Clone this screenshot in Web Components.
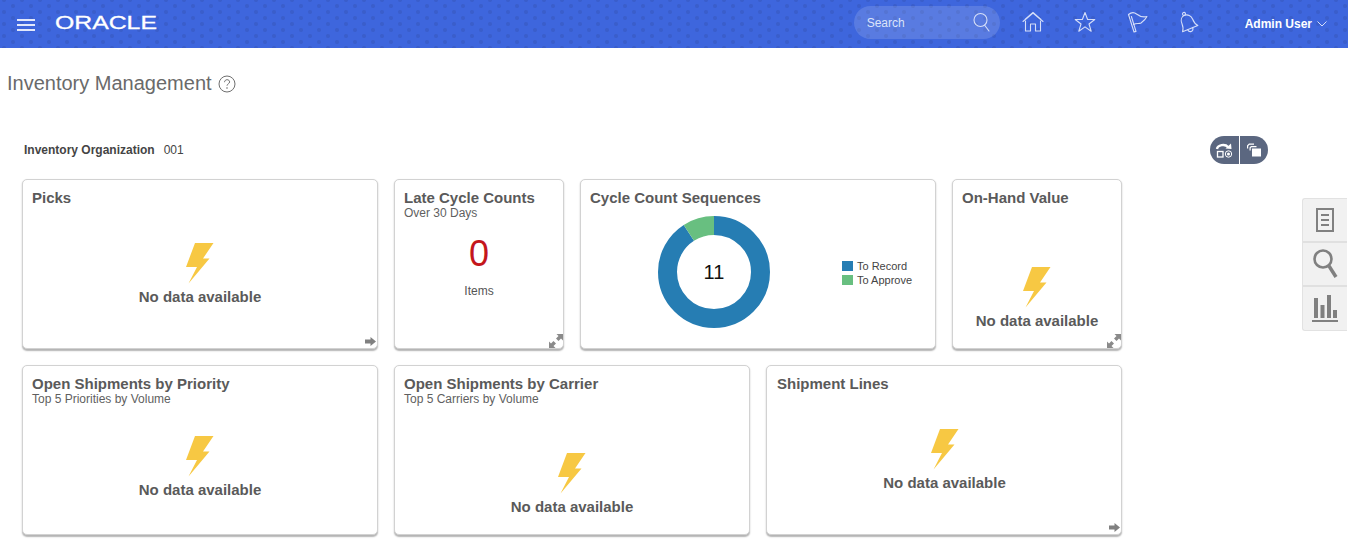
<!DOCTYPE html>
<html lang="en">
<head>
<meta charset="utf-8">
<title>Inventory Management</title>
<style>
  html, body { margin: 0; padding: 0; background: #fff; overflow: hidden; }
  body { font-family: "Liberation Sans", Arial, sans-serif; color: #555; height: 542px; position: relative; }
</style>
</head>
<body>
  <app-header></app-header>
  <page-title>Inventory Management</page-title>
  <org-bar label="Inventory Organization" value="001"></org-bar>
  <side-tabs></side-tabs>
  <card-grid>
    <dash-card style="grid-column: span 2" heading="Picks" corner="arrow"><no-data offset="36"></no-data></dash-card>
    <dash-card heading="Late Cycle Counts" sub="Over 30 Days" corner="expand"><count-tile value="0" unit="Items"></count-tile></dash-card>
    <dash-card style="grid-column: span 2" heading="Cycle Count Sequences"><donut-chart total="11"></donut-chart></dash-card>
    <dash-card heading="On-Hand Value" corner="expand"><no-data offset="60"></no-data></dash-card>
    <dash-card style="grid-column: span 2" heading="Open Shipments by Priority" sub="Top 5 Priorities by Volume"><no-data offset="31"></no-data></dash-card>
    <dash-card style="grid-column: span 2" heading="Open Shipments by Carrier" sub="Top 5 Carriers by Volume"><no-data offset="48"></no-data></dash-card>
    <dash-card style="grid-column: span 2; padding-left: 10px" heading="Shipment Lines" corner="arrow"><no-data offset="36"></no-data></dash-card>
  </card-grid>

<script>
const ICONS = {
  search: '<circle cx="10.5" cy="9" r="6.5"/><path d="M14.5 14l4.5 6"/>',
  home: '<path d="M2 11.5 12 3l10 8.500M4 9.500 12 2.500l8 7"/><path d="M4.500 11v10h5v-7h5v7h5V11"/>',
  star: '<path d="M12 2.500l2.600 7h7.200l-5.800 4.500 2.200 7.200-6.200-4.300-6.200 4.300 2.200-7.200L2.200 9.500h7.200z"/>',
  flag: '<path d="M3.500 4.500 9 22l2-.6L6.400 6.500"/><path d="M3.500 4.500C6 2.500 9 2 11.500 4s6 3.500 10.500 2.500c-1.500 3-4 5-6 6.500-2 1-5-.2-7.500 1.500"/>',
  bell: '<g transform="translate(-1 .5) rotate(-22 12 12)"><circle cx="11.500" cy="2.600" r="1.500"/><path d="M11.500 4C8 4 6 7 6 10.500c0 3.500-.8 6-2.500 8h16.500c-1.700-2-2.500-4.500-2.500-8C17.500 7 15 4 11.500 4z"/><path d="M9 18.500c.2 2 1.300 3 2.700 3s2.600-1 2.800-3"/></g>'
};

function strokeIcon(name, size) {
  return `<svg width="${size}" height="${size}" viewBox="0 0 24 24" fill="none" stroke="#d5def8" stroke-width="1.100" stroke-linejoin="round" stroke-linecap="round">${ICONS[name]}</svg>`;
}

class AppHeader extends HTMLElement {
  connectedCallback() {
    this.attachShadow({ mode: 'open' }).innerHTML = `
      <style>
        :host {
          display: flex;
          align-items: center;
          height: 48px;
          padding: 0 21px 0 17px;
          box-sizing: border-box;
          background-color: #3e66dd;
          background-image:
            radial-gradient(circle, #3a5ecb 0 1.500px, transparent 2.500px),
            radial-gradient(circle, #3a5ecb 0 1.500px, transparent 2.500px);
          background-size: 18px 12px;
          background-position: 4px 0, 13px 6px;
          color: #fff;
        }
        .burger { width: 18px; height: 12px; margin-top: 1px; border-top: 2px solid #e2e8fb; border-bottom: 2px solid #e2e8fb; position: relative; box-sizing: border-box; }
        .burger::after { content: ""; position: absolute; left: 0; right: 0; top: 3px; height: 2px; background: #e2e8fb; }
        .logo { width: 102px; margin-left: 20px; margin-top: -2px; font-size: 18.500px; line-height: 20px; font-weight: 400; color: #fff; -webkit-text-stroke: .3px #fff; transform: scaleX(1.340); transform-origin: left center; white-space: nowrap; }
        .spacer { flex: 1; }
        .search { display: flex; align-items: center; justify-content: space-between; width: 146px; height: 33px; margin-top: -3px; padding: 0 6px 0 13px; box-sizing: border-box; border-radius: 17px; background: rgba(255,255,255,.14); font-size: 12px; color: #dbe3fa; }
        .search svg, .tool { display: block; }
        .tools { display: flex; gap: 28px; margin-left: 21px; margin-top: -4px; }
        .user { display: flex; align-items: center; gap: 5px; margin-left: 44px; font-size: 12px; font-weight: 700; }
      </style>
      <div class="burger"></div>
      <div class="logo">ORACLE</div>
      <div class="spacer"></div>
      <div class="search"><span>Search</span>${strokeIcon('search', 24)}</div>
      <div class="tools">
        ${['home', 'star', 'flag', 'bell'].map(n => strokeIcon(n, 24)).join('')}
      </div>
      <div class="user">
        <span>Admin User</span>
        <svg width="10" height="6" viewBox="0 0 10 6" fill="none" stroke="#d5def8"><path d="M.5.500 5 5 9.500.500"/></svg>
      </div>`;
  }
}

class PageTitle extends HTMLElement {
  connectedCallback() {
    this.attachShadow({ mode: 'open' }).innerHTML = `
      <style>
        :host { display: flex; align-items: center; gap: 6px; height: 24px; margin: 23px 0 0 7px; font-size: 20px; color: #6a6a6a; }
        svg { display: block; margin-top: 1px; }
      </style>
      <slot></slot>
      <svg width="18" height="18" viewBox="0 0 18 18" fill="none" stroke="#6f6f6f">
        <circle cx="9" cy="9" r="8"/>
        <path d="M6.500 7.200C6.600 5.600 7.700 4.700 9.100 4.700c1.400 0 2.500.9 2.500 2.200 0 1.900-2.600 2-2.600 3.800"/>
        <path d="M9 12.300v1.400" stroke-width="1.200"/>
      </svg>`;
  }
}

class OrgBar extends HTMLElement {
  connectedCallback() {
    this.attachShadow({ mode: 'open' }).innerHTML = `
      <style>
        :host { display: flex; align-items: center; justify-content: space-between; width: 1268px; height: 28px; margin-top: 41px; padding-left: 24px; box-sizing: border-box; font-size: 12px; color: #444; }
        b { margin-right: 9px; }
        .pill { display: flex; height: 28px; width: 58px; border-radius: 14px; overflow: hidden; gap: 1px; background: #fff; }
        .pill div { flex: 1; background: #5b6780; display: flex; align-items: center; justify-content: center; }
      </style>
      <div><b>${this.getAttribute('label')}</b><span>${this.getAttribute('value')}</span></div>
      <div class="pill">
        <div>
          <svg width="20" height="18" viewBox="0 0 20 18" fill="none" stroke="#fff">
            <path d="M3 8c.6-4 8-5.500 11-2" stroke-width="2.400"/><path d="M11.500 7.500 17.500 8l-.5-5.500z" fill="#fff" stroke="none"/>
            <rect x="3.500" y="10.500" width="5.500" height="5.500" stroke-width="1.300"/>
            <circle cx="14.500" cy="13" r="3.200"/><circle cx="14.500" cy="13" r="1.500" fill="#fff" stroke="none"/>
          </svg>
        </div>
        <div>
          <svg width="18" height="16" viewBox="0 0 18 16">
            <path d="M2 6.500V3.500L4 1.500h5v1.200H4.500L3.200 4v2.500zM4.500 8.500V5.500L6 4h5.500v1.200h-5L5.700 6v2.500z" fill="#fff"/>
            <rect x="7" y="6.500" width="9" height="8" fill="#fff"/>
          </svg>
        </div>
      </div>`;
  }
}

class SideTabs extends HTMLElement {
  connectedCallback() {
    this.attachShadow({ mode: 'open' }).innerHTML = `
      <style>
        :host { position: absolute; top: 198px; right: 1px; width: 45px; display: block; border: 1px solid #e2e2e2; border-right: 0; border-radius: 3px 0 0 3px; box-sizing: border-box; background: #f1f1f1; }
        div { height: 44px; display: flex; align-items: center; justify-content: center; border-bottom: 2px solid #e0e0e0; box-sizing: border-box; }
        div:last-child { height: 43px; border-bottom: 0; }
      </style>
      <div>
        <svg width="20" height="26" viewBox="0 0 20 26" fill="none" stroke="#808080" stroke-width="2">
          <rect x="2" y="2" width="16" height="22"/><path d="M6 8h8M6 13h8M6 18h8"/>
        </svg>
      </div>
      <div>
        <svg width="26" height="32" viewBox="0 0 26 32" fill="none" stroke="#808080">
          <circle cx="11" cy="11" r="8.500" stroke-width="2.600"/><path d="M17 18l7 11" stroke-width="3.500"/>
        </svg>
      </div>
      <div>
        <svg width="28" height="28" viewBox="0 0 28 28" fill="#808080">
          <rect x="3" y="3" width="4" height="20"/><rect x="9.500" y="10" width="4" height="13"/><rect x="16" y="0" width="4" height="23"/><rect x="22" y="15" width="4" height="8"/>
          <rect x="1" y="25" width="26" height="2"/>
        </svg>
      </div>`;
  }
}

class CardGrid extends HTMLElement {
  connectedCallback() {
    this.attachShadow({ mode: 'open' }).innerHTML = `
      <style>
        :host { display: grid; grid-template-columns: repeat(6, 170px); grid-auto-rows: 170px; gap: 16px; margin: 15px 0 0 22px; }
      </style>
      <slot></slot>`;
  }
}

class DashCard extends HTMLElement {
  connectedCallback() {
    const sub = this.getAttribute('sub');
    const corner = this.getAttribute('corner');
    const corners = {
      arrow: '<svg class="corner arrow" width="11" height="9" viewBox="0 0 11 9" fill="#808080"><path d="M0 2.500h5.500V0L11 4.500 5.500 9V6.500H0z"/></svg>',
      expand: '<svg class="corner expand" width="14" height="14" viewBox="0 0 14 14" fill="#8a8a8a"><path d="M7.500 0H14v6.500l-2-2-2.500 2.500L7 4.500 9.500 2zM0 14V7.500l2 2L4.500 7 7 9.500 4.500 12l2 2z"/></svg>'
    };
    this.attachShadow({ mode: 'open' }).innerHTML = `
      <style>
        :host { display: block; position: relative; box-sizing: border-box; background: #fff; border: 1px solid #d2d2d2; border-radius: 5px; box-shadow: 0 1.500px 1.500px #b4b4b4; padding: 9px 9px 0; color: #5a5a5a; }
        h3 { margin: 0; font-size: 15px; line-height: 18px; font-weight: 700; color: #5a5a5a; }
        p { margin: 0; font-size: 12px; line-height: 12px; color: #5f5f5f; }
        .corner { position: absolute; }
        .arrow { right: 1px; bottom: 2px; }
        .expand { right: 0; bottom: 0; }
      </style>
      <h3>${this.getAttribute('heading')}</h3>
      ${sub ? `<p>${sub}</p>` : ''}
      <slot></slot>
      ${corner ? corners[corner] : ''}`;
  }
}

class NoData extends HTMLElement {
  connectedCallback() {
    this.attachShadow({ mode: 'open' }).innerHTML = `
      <style>
        :host { display: flex; flex-direction: column; align-items: center; margin-top: ${this.getAttribute('offset')}px; font-size: 15px; font-weight: 700; color: #5a5a5a; }
        svg { display: block; margin-bottom: 5px; }
        span { line-height: 16px; }
      </style>
      <svg width="28" height="41" viewBox="0 0 28 41"><path d="M9 0h18.500L17 15.500h6.500L2.500 40.500 11 24H0z" fill="#f7c843"/></svg>
      <span>No data available</span>`;
  }
}

class CountTile extends HTMLElement {
  connectedCallback() {
    this.attachShadow({ mode: 'open' }).innerHTML = `
      <style>
        :host { display: flex; flex-direction: column; align-items: center; margin-top: 14px; }
        .num { font-size: 36px; line-height: 42px; color: #c4161c; }
        .unit { margin-top: 9px; font-size: 12px; line-height: 14px; color: #555; }
      </style>
      <div class="num">${this.getAttribute('value')}</div>
      <div class="unit">${this.getAttribute('unit')}</div>`;
  }
}

class DonutChart extends HTMLElement {
  connectedCallback() {
    this.attachShadow({ mode: 'open' }).innerHTML = `
      <style>
        :host { display: flex; align-items: center; margin: 9px 0 0 68px; }
        .ring { position: relative; width: 112px; height: 112px; }
        svg { display: block; }
        .total { position: absolute; inset: 0; display: flex; align-items: center; justify-content: center; font-size: 20px; color: #111; }
        ul { list-style: none; margin: 2px 0 0 72px; padding: 0; font-size: 11px; line-height: 14px; color: #444; }
        li { display: flex; align-items: center; gap: 4px; white-space: nowrap; }
        i { width: 11px; height: 10px; }
      </style>
      <div class="ring">
        <svg width="112" height="112" viewBox="0 0 112 112" fill="none" stroke-width="19">
          <g transform="rotate(-90 56 56)">
            <circle cx="56" cy="56" r="46.500" pathLength="11" stroke="#267db3" stroke-dasharray="10 1"/>
            <circle cx="56" cy="56" r="46.500" pathLength="11" stroke="#68bf80" stroke-dasharray="1 10" stroke-dashoffset="-10"/>
          </g>
        </svg>
        <div class="total">${this.getAttribute('total')}</div>
      </div>
      <ul>
        <li><i style="background:#267db3"></i>To Record</li>
        <li><i style="background:#68bf80"></i>To Approve</li>
      </ul>`;
  }
}

customElements.define('app-header', AppHeader);
customElements.define('page-title', PageTitle);
customElements.define('org-bar', OrgBar);
customElements.define('side-tabs', SideTabs);
customElements.define('card-grid', CardGrid);
customElements.define('dash-card', DashCard);
customElements.define('no-data', NoData);
customElements.define('count-tile', CountTile);
customElements.define('donut-chart', DonutChart);
</script>
</body>
</html>
